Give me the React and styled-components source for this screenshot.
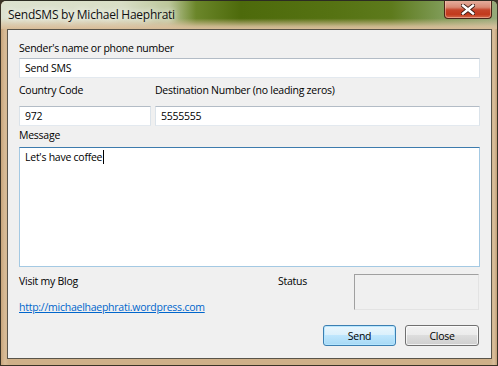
import React from "react";
import styled, { createGlobalStyle } from "styled-components";

const GlobalStyle = createGlobalStyle`
  html, body {
    margin: 0;
    padding: 0;
    background: #3b3326;
  }
  body {
    font-family: "Open Sans", "Liberation Sans", sans-serif;
    font-size: 10.5px;
    letter-spacing: -0.25px;
    color: #000;
  }
  input, button {
    letter-spacing: -0.25px;
  }
`;

function App() {
  return (
    <>
      <GlobalStyle />
      <Window>
        <TitleBar>
          <Title>SendSMS by Michael Haephrati</Title>
          <CloseButton aria-label="Close">
            <svg width="14" height="11" viewBox="0 0 14 11">
              <path
                d="M2 1.5 L12 9.5 M12 1.5 L2 9.5"
                stroke="#3a1a12"
                strokeWidth="4.2"
                strokeLinecap="square"
              />
              <path
                d="M2 1.5 L12 9.5 M12 1.5 L2 9.5"
                stroke="#fff"
                strokeWidth="2.4"
                strokeLinecap="square"
              />
            </svg>
          </CloseButton>
        </TitleBar>

        <Client>
          <Label $top={11}>Sender's name or phone number</Label>
          <TextBox $top={2} defaultValue="Send SMS" />

          <NumberRow>
            <Label $top={5}>Country Code</Label>
            <Label $top={5}>Destination Number (no leading zeros)</Label>
            <TextBox $top={8} defaultValue="972" />
            <TextBox $top={8} defaultValue="5555555" />
          </NumberRow>

          <Label $top={2}>Message</Label>
          <MessageBox>
            Let's have coffee
            <Caret />
          </MessageBox>

          <Footer>
            <BlogColumn>
              <Label>Visit my Blog</Label>
              <BlogLink href="#">http://michaelhaephrati.wordpress.com</BlogLink>
            </BlogColumn>
            <Label>Status</Label>
            <StatusBox />
          </Footer>

          <ButtonRow>
            <Button $primary>Send</Button>
            <Button>Close</Button>
          </ButtonRow>
        </Client>
      </Window>
    </>
  );
}

export default App;

const Window = styled.div`
  width: 498px;
  height: 366px;
  box-sizing: border-box;
  display: flex;
  flex-direction: column;
  border: 1px solid #3b3326;
  border-top-color: #2c2c22;
  border-radius: 6px 6px 0 0;
  background: linear-gradient(
    to right,
    #c8a57c 0,
    #d8bc98 4px,
    #cfb089 8px,
    #cfb089 calc(100% - 6px),
    #d9be9b calc(100% - 3px),
    #c3a077 100%
  );
  overflow: hidden;
`;

const TitleBar = styled.div`
  height: 28px;
  flex: none;
  display: flex;
  justify-content: space-between;
  align-items: flex-start;
  padding: 0 5px 0 7px;
  background:
    linear-gradient(
      to bottom,
      rgba(216, 190, 154, 0) 0,
      rgba(216, 190, 154, 0) 62%,
      rgba(218, 192, 158, 0.85) 90%,
      #d8bd98 100%
    ),
    linear-gradient(
      to right,
      #dde2cf 0,
      #d8dec6 120px,
      #bcc79a 168px,
      #6b862a 195px,
      #4d6a0b 240px,
      #557212 330px,
      #5d7a1c 390px,
      #7e9a55 440px,
      #97ab7c 498px
    );
`;

const Title = styled.div`
  margin-top: 6px;
  font-family: "Open Sans", "Liberation Sans", sans-serif;
  font-size: 12px;
  letter-spacing: -0.25px;
  line-height: 16px;
  color: #101010;
  text-shadow: 0 0 6px rgba(255, 255, 255, 0.95), 0 0 10px rgba(255, 255, 255, 0.8);
`;

const CloseButton = styled.button`
  width: 48px;
  height: 19px;
  margin-top: -1px;
  padding: 0;
  display: flex;
  align-items: center;
  justify-content: center;
  border: 1px solid #4a2418;
  border-top: none;
  border-radius: 0 0 4px 4px;
  background: linear-gradient(
    to bottom,
    #e6b2a2 0,
    #d88a74 40%,
    #c5452a 55%,
    #c23a1c 80%,
    #d46a4c 100%
  );
  box-shadow: inset 0 0 0 1px rgba(255, 220, 200, 0.45);
  cursor: default;
`;

const Client = styled.div`
  flex: 1;
  margin: 0 5px 6px 6px;
  display: flex;
  flex-direction: column;
  padding: 0 11px;
  border: 1px solid #59544a;
  background: #f0f0f0;
`;

const Label = styled.div`
  margin-top: ${(p) => p.$top || 0}px;
  font-size: 10.5px;
  line-height: 15px;
  white-space: nowrap;
`;

const TextBox = styled.input`
  box-sizing: border-box;
  width: 100%;
  height: 20px;
  margin: ${(p) => p.$top || 0}px 0 0;
  padding: 0 5px;
  font-family: "Open Sans", "Liberation Sans", sans-serif;
  font-size: 10.5px;
  color: #000;
  background: #fff;
  border: 1px solid #dbe3ea;
  border-top-color: #b3bcc6;
  border-bottom-color: #e3e9ef;
  outline: none;
`;

const NumberRow = styled.div`
  display: grid;
  grid-template-columns: 132px 1fr;
  column-gap: 4px;
`;

const MessageBox = styled.div`
  box-sizing: border-box;
  height: 120px;
  margin-top: 4px;
  padding: 2px 5px;
  font-size: 10.5px;
  line-height: 15px;
  background: #fff;
  border: 1px solid #a4c9e3;
  border-top-color: #3d7bad;
`;

const Caret = styled.span`
  display: inline-block;
  width: 0;
  height: 14px;
  margin-left: 1px;
  vertical-align: -3px;
  border-left: 1px solid #000;
`;

const Footer = styled.div`
  margin-top: 7px;
  display: grid;
  grid-template-columns: 259px 76px 125px;
  align-items: start;
`;

const BlogColumn = styled.div`
  display: flex;
  flex-direction: column;
  gap: 11px;
`;

const BlogLink = styled.a`
  font-size: 10.5px;
  line-height: 15px;
  color: #0066cc;
  text-decoration: underline;
`;

const StatusBox = styled.div`
  box-sizing: border-box;
  height: 36px;
  background: #f0f0f0;
  border: 1px solid #e3e3e3;
  border-top-color: #a0a0a0;
  border-left-color: #a0a0a0;
`;

const ButtonRow = styled.div`
  margin-top: 10px;
  display: flex;
  justify-content: flex-end;
  gap: 9px;
  padding-right: 1px;
`;

const Button = styled.button`
  box-sizing: border-box;
  width: ${(p) => (p.$primary ? 73 : 74)}px;
  height: 21px;
  padding: 0;
  font-family: "Open Sans", "Liberation Sans", sans-serif;
  font-size: 10.5px;
  color: #000;
  border: 1px solid ${(p) => (p.$primary ? "#3c7fb1" : "#707070")};
  border-radius: 3px;
  background: ${(p) =>
    p.$primary
      ? "linear-gradient(to bottom, #eaf6fd 0, #d9f0fc 50%, #bee6fd 50%, #a7d9f5 100%)"
      : "linear-gradient(to bottom, #f2f2f2 0, #ebebeb 50%, #dddddd 50%, #cfcfcf 100%)"};
  box-shadow: inset 0 0 0 1px ${(p) => (p.$primary ? "rgba(180, 230, 255, 0.9)" : "rgba(255, 255, 255, 0.7)")};
  cursor: default;
`;
